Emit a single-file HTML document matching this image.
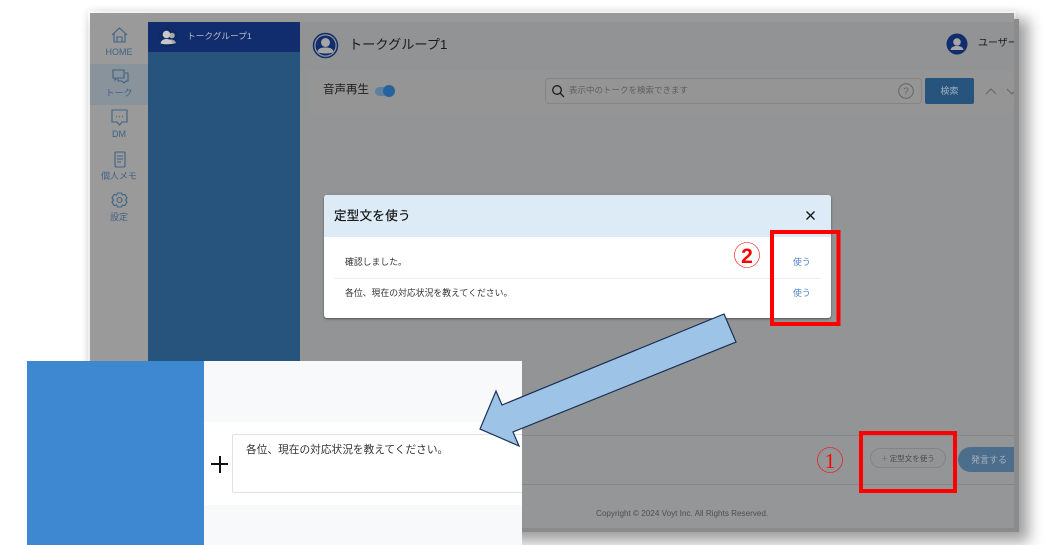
<!DOCTYPE html>
<html lang="ja"><head><meta charset="utf-8">
<style>
html,body{margin:0;padding:0;background:#fff}
body{width:1062px;height:545px;overflow:hidden;position:relative;font-family:"Liberation Sans","Noto Sans CJK JP",sans-serif}
.a{position:absolute}
.t{position:absolute;white-space:nowrap;line-height:1}
#win{left:90px;top:13px;width:924px;height:515px;background:#939495;overflow:hidden}
#sh1{left:95px;top:19px;width:924px;height:513px;background:#8b8b8b;box-shadow:5px 5px 13px 5px rgba(0,0,0,.36)}
#sh0{left:88px;top:11px;width:928px;height:519px;box-shadow:0 0 7px rgba(0,0,0,.10)}
.nav{color:#3f6284;font-size:9px;text-align:center;width:58px;left:0}
</style></head><body>
<div class="a" id="sh0"></div>
<div class="a" id="sh1"></div>
<div class="a" id="win">
  <div class="a" style="left:0;top:0;width:924px;height:9px;background:#999"></div>
  <div class="a" style="left:0;top:0;width:58px;height:515px;background:#9a9a9a"></div>
  <div class="a" style="left:0;top:51px;width:58px;height:41px;background:#89939c"></div>
  <div class="a" style="left:58px;top:9px;width:152px;height:506px;background:#27547c"></div>
  <div class="a" style="left:58px;top:9px;width:152px;height:30px;background:#122d6e"></div>
  <div class="a" style="left:210px;top:9px;width:714px;height:48px;background:#929395"></div>
  <div class="a" style="left:218px;top:57px;width:706px;height:46px;background:#959596;border-radius:8px"></div>
  <div class="a" style="left:210px;top:425px;width:714px;height:90px;background:#959697"></div>

  <svg class="a" style="left:0;top:0" width="210" height="220" fill="none" stroke="#3f6284" stroke-width="1.1">
    <path d="M22 22 L29.500 15 L37 22 M24 20.500 V29 H35 V20.500 M27 29 V24 H32 V29"/>
    <path d="M23 57 H34 V65 H27 L25 67 V65 H23 Z M35 60 H38 V68 H36 L34 70 L32 68 H28 V66"/>
    <path d="M22 97 H37 V109 H32 L29.500 112 L27 109 H22 Z"/>
    <path d="M26 103.500 H26.800 M29 103.500 H29.800 M32 103.500 H32.800" stroke-width="1.400"/>
    <rect x="25" y="139" width="10" height="15" rx="1"/>
    <path d="M27 143 H33 M27 146 H33 M27 149 H31"/>
    <circle cx="29.500" cy="187" r="2.500"/>
    <path d="M27.500 180 H31.500 L32.500 182 L35 181.500 L37 185 L35.500 187 L37 189 L35 192.500 L32.500 192 L31.500 194 H27.500 L26.500 192 L24 192.500 L22 189 L23.500 187 L22 185 L24 181.500 L26.500 182 Z"/>
    <circle cx="78" cy="24" r="10" fill="#0f2a66" stroke="none"/>
    <circle cx="82" cy="22.500" r="2.800" fill="#a8a8a8" stroke="none"/>
    <path d="M77 27 C80 26 85 26 86 30 C84 31 81 31 79 31 Z" fill="#a8a8a8" stroke="none"/>
    <circle cx="76.500" cy="21.500" r="3.800" fill="#c8c8c8" stroke="none"/>
    <path d="M70.500 30.500 C71 27 74 26 76.500 26 C79 26 82 27 82.500 30.500 C78 31.500 75 31.500 70.500 30.500 Z" fill="#c8c8c8" stroke="none"/>
  </svg>
  <div class="t nav" style="top:35px">HOME</div>
  <div class="t nav" style="top:76px">トーク</div>
  <div class="t nav" style="top:117px">DM</div>
  <div class="t nav" style="top:159px">個人メモ</div>
  <div class="t nav" style="top:200px">設定</div>
  <div class="t" style="left:97px;top:19px;font-size:8.700px;color:#b5bac8">トークグループ1</div>

  <svg class="a" style="left:222px;top:19px" width="27" height="27">
    <circle cx="13.500" cy="13.500" r="12" fill="#939495" stroke="#122d6e" stroke-width="1.500"/>
    <circle cx="13.500" cy="13.500" r="10" fill="#122d6e"/>
    <circle cx="13.500" cy="10.500" r="4.500" fill="#a5a5a5"/>
    <path d="M5.500 20 C6 16 10 15.500 13.500 15.500 C17 15.500 21 16 21.500 20 C18 22 9 22 5.500 20 Z" fill="#a5a5a5"/>
  </svg>
  <div class="t" style="left:259px;top:25px;font-size:13.200px;color:#1a1a1a">トークグループ1</div>

  <svg class="a" style="left:856px;top:20px" width="22" height="22">
    <circle cx="11" cy="11" r="10.500" fill="#122d6e"/>
    <circle cx="11" cy="9" r="3.800" fill="#a5a5a5"/>
    <path d="M4.500 17 C5 13.500 8.500 13 11 13 C13.500 13 17 13.500 17.500 17 Z" fill="#a5a5a5"/>
  </svg>
  <div class="t" style="left:888px;top:26px;font-size:10px;color:#1a1a1a">ユーザー名</div>

  <div class="t" style="left:233px;top:72px;font-size:11.500px;color:#1c1c1c">音声再生</div>
  <div class="a" style="left:285px;top:74px;width:16px;height:9px;border-radius:5px;background:#5f7f9f"></div>
  <div class="a" style="left:293px;top:72px;width:12px;height:12px;border-radius:50%;background:#27629c"></div>

  <div class="a" style="left:455px;top:65px;width:377px;height:26px;box-sizing:border-box;border:1px solid #858585;border-radius:4px"></div>
  <svg class="a" style="left:461px;top:71px" width="14" height="14" fill="none" stroke="#1c1c1c" stroke-width="1.300">
    <circle cx="6" cy="6" r="4.300"/><path d="M9.200 9.200 L13 13"/>
  </svg>
  <div class="t" style="left:479px;top:73px;font-size:8.500px;color:#5e5e5e">表示中のトークを検索できます</div>
  <svg class="a" style="left:808px;top:70px" width="16" height="16" fill="none" stroke="#666">
    <circle cx="8" cy="8" r="7.300"/>
    <text x="8" y="11.500" font-size="10" fill="#666" stroke="none" text-anchor="middle" font-family="Liberation Sans">?</text>
  </svg>
  <div class="a" style="left:835px;top:65px;width:49px;height:26px;background:#27547c;border-radius:2px;color:#a3b0bd;font-size:9px;line-height:26px;text-align:center">検索</div>
  <svg class="a" style="left:894px;top:72px" width="30" height="12" fill="none" stroke="#666" stroke-width="1.100">
    <path d="M2 9 L7 4 L12 9 M23 4 L28 9 L33 4"/>
  </svg>

  <div class="a" style="left:397px;top:422px;width:527px;height:50px;box-sizing:border-box;border:1px solid #858687;border-right:0;background:#949596"></div>
  <div class="a" style="left:780px;top:435px;width:76px;height:20px;box-sizing:border-box;border:1px solid #848484;border-radius:10px;color:#4a4a4a;font-size:7.500px;line-height:20px;text-align:center;background:#939495"><span style="color:#777;font-size:11px;vertical-align:-1px">+</span> 定型文を使う</div>
  <div class="a" style="left:868px;top:434px;width:70px;height:25px;border-radius:13px;background:#4d6d8d;color:#a8b2bc;font-size:9px;line-height:26px;text-indent:13px">発言する</div>

  <div class="t" style="left:506px;top:497px;font-size:8.150px;color:#4f4f4f">Copyright © 2024 Voyt Inc. All Rights Reserved.</div>
</div>

<div class="a" style="left:324px;top:195px;width:507px;height:123px;background:#fff;border-radius:3px;overflow:hidden;box-shadow:0 1px 2px rgba(0,0,0,.45)">
  <div class="a" style="left:0;top:0;width:507px;height:42px;background:#dcebf6"></div>
  <div class="t" style="left:10px;top:14.500px;font-size:12.500px;color:#111;letter-spacing:.3px;-webkit-text-stroke:.2px #111">定型文を使う</div>
  <svg class="a" style="left:481px;top:15px" width="11" height="11" stroke="#111" stroke-width="1.300"><path d="M1.500 1.500 L9.500 9.500 M9.500 1.500 L1.500 9.500"/></svg>
  <div class="t" style="left:21px;top:63px;font-size:8.850px;color:#333">確認しました。</div>
  <div class="a" style="left:10px;top:83px;width:487px;height:1px;background:#eeeeee"></div>
  <div class="t" style="left:21px;top:94px;font-size:8.850px;color:#333">各位、現在の対応状況を教えてください。</div>
  <div class="t" style="left:469px;top:62.500px;font-size:8.850px;color:#4f82c8">使う</div>
  <div class="t" style="left:469px;top:93.500px;font-size:8.850px;color:#4f82c8">使う</div>
</div>

<div class="a" style="left:27px;top:361px;width:495px;height:184px;background:#f8f9fb;overflow:hidden">
  <div class="a" style="left:0;top:0;width:177px;height:184px;background:#3d88d0"></div>
  <div class="a" style="left:177px;top:61px;width:318px;height:83px;background:#fff"></div>
  <div class="a" style="left:205px;top:73px;width:295px;height:59px;box-sizing:border-box;border:1px solid #dfe1e4;background:#fff;border-radius:2px"></div>
  <div class="a" style="left:184px;top:102px;width:17px;height:2px;background:#111"></div>
  <div class="a" style="left:191.500px;top:94.500px;width:2px;height:17px;background:#111"></div>
  <div class="t" style="left:219px;top:84px;font-size:10.700px;color:#333">各位、現在の対応状況を教えてください。</div>
</div>

<svg class="a" style="left:0;top:0" width="1062" height="545">
  <polygon points="724,314 736,342 513,432 519,446 480,429 496,391 502,405" fill="#9dc3e6" stroke="#1a2f52" stroke-width="1.200"/>
  <rect x="772" y="232" width="66.500" height="92" fill="none" stroke="#ff0000" stroke-width="4"/>
  <rect x="861" y="433" width="94" height="58" fill="none" stroke="#ff0000" stroke-width="4"/>
  <circle cx="747" cy="255" r="12.500" fill="none" stroke="#ff0000" stroke-width=".6"/>
  <text x="747" y="263" font-size="21" font-weight="bold" fill="#ff0000" text-anchor="middle" font-family="Liberation Sans">2</text>
  <circle cx="830" cy="460" r="12.500" fill="none" stroke="#ff0000" stroke-width=".6"/>
  <text x="830" y="468" font-size="21" fill="#ff0000" text-anchor="middle" font-family="Liberation Serif">1</text>
</svg>
</body></html>
